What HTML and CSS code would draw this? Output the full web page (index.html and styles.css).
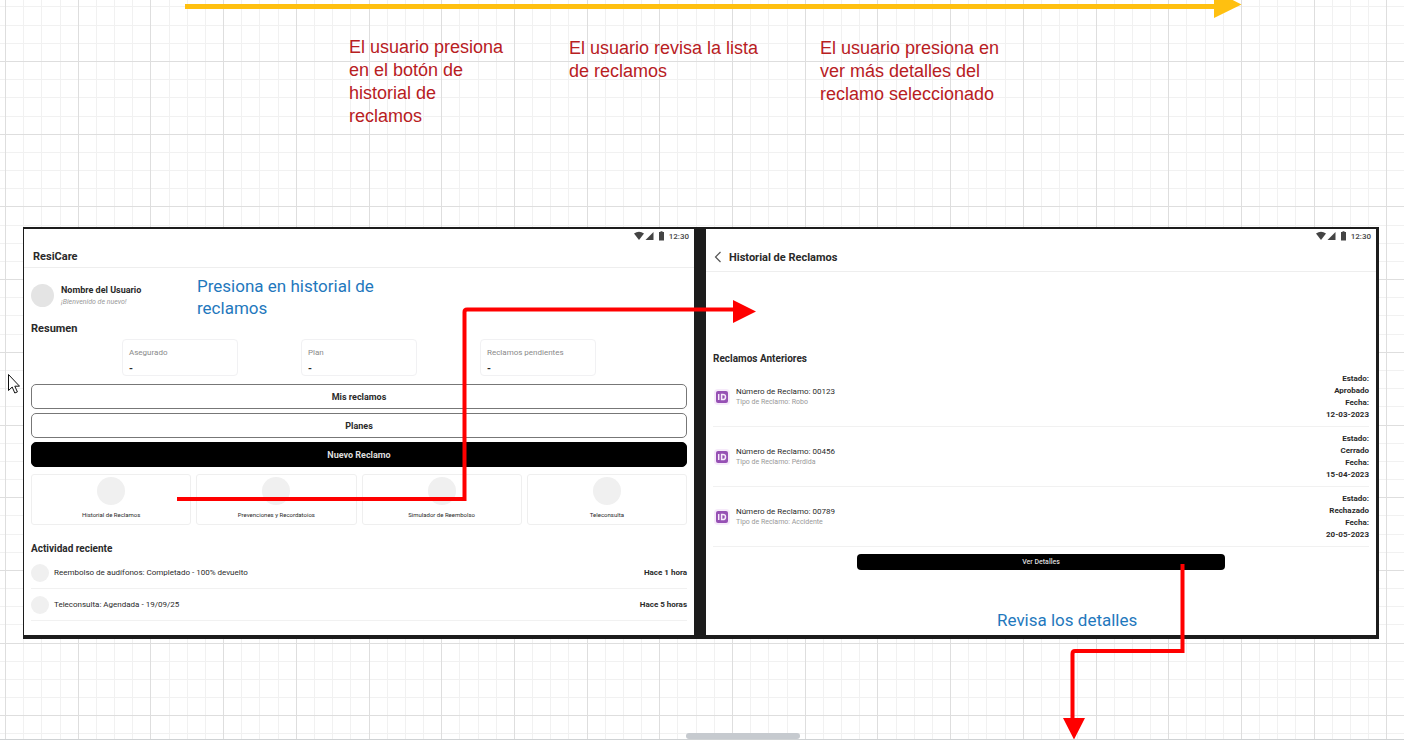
FILE: index.html
```html
<!DOCTYPE html>
<html lang="es">
<head>
<meta charset="utf-8">
<title>Flujo de reclamos</title>
<link rel="stylesheet" href="styles.css">
</head>
<body>
<svg class="defs" width="0" height="0" aria-hidden="true">
  <symbol id="status" viewBox="0 0 31 10">
    <path d="M0 2.600Q5 -1 10 2.600L5 9z"/>
    <path d="M19.500 1v8h-8z"/>
    <path d="M25 1h1.500V.3h2V1H30v8.400h-5z"/>
  </symbol>
  <symbol id="badge" viewBox="0 0 18 18">
    <rect x="1" y="1" width="16" height="16" rx="4" fill="#f6eafa"/>
    <rect x="3" y="3" width="12" height="12" rx="2" fill="#9650b4"/>
    <path d="M5.700 6v6M8.600 6.400v5.200h1.200q2.700 0 2.700-2.600t-2.700-2.600z" fill="none" stroke="#f6eafa" stroke-width="1.500"/>
  </symbol>
</svg>
<main class="board">
  <svg class="grid" id="grid" aria-hidden="true"></svg>

  <p class="note note-first">El usuario presiona en el botón de historial de reclamos</p>
  <p class="note note-second">El usuario revisa la lista de reclamos</p>
  <p class="note note-third">El usuario presiona en ver más detalles del reclamo seleccionado</p>

  <div class="screens">
    <section class="screen">
      <div class="statusbar"><svg width="31" height="10"><use href="#status"/></svg><span>12:30</span></div>
      <header class="appbar"><h1>ResiCare</h1></header>
      <div class="home">
        <div class="profile">
          <span class="avatar"></span>
          <div><strong>Nombre del Usuario</strong><em>¡Bienvenido de nuevo!</em></div>
        </div>
        <h2 class="summary-title">Resumen</h2>
        <div class="stats">
          <div class="stat"><span>Asegurado</span><b>-</b></div>
          <div class="stat"><span>Plan</span><b>-</b></div>
          <div class="stat"><span>Reclamos pendientes</span><b>-</b></div>
        </div>
        <div class="actions">
          <button type="button">Mis reclamos</button>
          <button type="button">Planes</button>
          <button type="button" class="primary">Nuevo Reclamo</button>
        </div>
        <div class="tiles">
          <button type="button"><i></i>Historial de Reclamos</button>
          <button type="button"><i></i>Prevenciones y Recordatoios</button>
          <button type="button"><i></i>Simulador de Reembolso</button>
          <button type="button"><i></i>Teleconsulta</button>
        </div>
        <h2 class="activity-title">Actividad reciente</h2>
        <ul class="activity">
          <li><i></i><span>Reembolso de audífonos: Completado - 100% devuelto</span><b>Hace 1 hora</b></li>
          <li><i></i><span>Teleconsulta: Agendada - 19/09/25</span><b>Hace 5 horas</b></li>
        </ul>
      </div>
    </section>

    <section class="screen">
      <div class="statusbar"><svg width="31" height="10"><use href="#status"/></svg><span>12:30</span></div>
      <header class="appbar appbar-back">
        <button type="button" class="back" aria-label="Volver"><svg width="8" height="12" viewBox="0 0 8 12"><path d="M6.500 1L1.500 6l5 5" fill="none" stroke="#555" stroke-width="1.200"/></svg></button>
        <h1>Historial de Reclamos</h1>
      </header>
      <div class="history">
        <h2>Reclamos Anteriores</h2>
        <ul class="claims">
          <li><svg width="18" height="18"><use href="#badge"/></svg><div class="claim"><span>Número de Reclamo: 00123</span><small>Tipo de Reclamo: Robo</small></div><b>Estado:<br>Aprobado<br>Fecha:<br>12-03-2023</b></li>
          <li><svg width="18" height="18"><use href="#badge"/></svg><div class="claim"><span>Número de Reclamo: 00456</span><small>Tipo de Reclamo: Pérdida</small></div><b>Estado:<br>Cerrado<br>Fecha:<br>15-04-2023</b></li>
          <li><svg width="18" height="18"><use href="#badge"/></svg><div class="claim"><span>Número de Reclamo: 00789</span><small>Tipo de Reclamo: Accidente</small></div><b>Estado:<br>Rechazado<br>Fecha:<br>20-05-2023</b></li>
        </ul>
        <button type="button" class="details">Ver Detalles</button>
      </div>
    </section>
  </div>

  <p class="hint hint-history">Presiona en historial de reclamos</p>
  <p class="hint hint-details">Revisa los detalles</p>

  <svg class="connectors" width="1404" height="740" aria-hidden="true">
    <path d="M185 6.500H1216" stroke="#ffc010" stroke-width="5" fill="none"/>
    <path d="M1214-9.500L1241.500 4.500 1214 18z" fill="#ffc010"/>
    <g fill="none" stroke="#f00" stroke-width="4">
      <path d="M177 499H464.500V312Q464.500 309.500 467 309.500H734"/>
      <path d="M1182.500 564V651H1075Q1072.500 651 1072.500 654V720"/>
    </g>
    <path d="M733 300L756 311.500 733 323zM1063 718H1085L1074 739.500z" fill="#f00"/>
  </svg>
  <svg class="pointer" width="12" height="20" viewBox="0 0 12 20" aria-hidden="true"><path d="M.5.500v16l3.700-3.500 2.600 6 2.600-1.100-2.600-5.700h4.700z" fill="#fff" stroke="#111"/></svg>
  <div class="thumb"></div>
</main>
<script src="grid.js"></script>
</body>
</html>
```
FILE: styles.css
```css
* { box-sizing: border-box; }
body {
  margin: 0;
  min-height: 100vh;
  display: flex;
  flex-direction: column;
  padding-bottom: 7px;
  background: #fff;
  color: #2a2a2a;
  font-family: Roboto, "Liberation Sans", sans-serif;
  font-size: 8px;
}
h1, h2, p, ul { margin: 0; padding: 0; }
h1, h2, b, strong { font-weight: 700; }
ul { list-style: none; }
button { font: inherit; color: inherit; cursor: pointer; }
svg { display: block; flex: none; }
.defs { position: absolute; }

.board {
  position: relative;
  flex: 1;
  padding: 227px 25px 0 23px;
  overflow: hidden;
  border-bottom: 1px solid #cfd2d4;
}
.grid { position: absolute; inset: 0; width: 100%; height: 100%; }
.connectors { position: absolute; left: 0; top: 0; }
.pointer { position: absolute; left: 8px; top: 374px; }
.thumb {
  position: absolute;
  left: 686px;
  bottom: 0;
  width: 114px;
  height: 6px;
  border-radius: 3px;
  background: #c6cacf;
}

.note, .hint { position: absolute; }
.note {
  color: #b8201f;
  font-family: "Liberation Sans", sans-serif;
  font-size: 18px;
  line-height: 23px;
}
.note-first { left: 349px; top: 36px; width: 165px; }
.note-second { left: 569px; top: 37px; width: 205px; }
.note-third { left: 820px; top: 37px; width: 190px; }
.hint { color: #1f78bd; font-size: 17px; line-height: 22px; }
.hint-history { left: 197px; top: 275px; width: 190px; }
.hint-details { left: 997px; top: 609px; }

.screens {
  position: relative;
  display: grid;
  grid-template-columns: 1fr 1fr;
  gap: 12px;
  background: #1c1c1c;
  border: solid #1c1c1c;
  border-width: 2px 3px 4px 1px;
}
.screen { background: #fff; min-height: 406px; }
.statusbar {
  display: flex;
  justify-content: flex-end;
  align-items: center;
  gap: 4px;
  height: 14px;
  padding: 0 5px;
  font-weight: 500;
  color: #444;
  fill: #444;
}
.appbar {
  display: flex;
  align-items: center;
  height: 25px;
  padding: 3px 9px 0;
  border-bottom: 1px solid #eee;
}
.appbar-back { height: 29px; padding: 0 8px; gap: 7px; }
h1 { font-size: 11px; }
.back { border: 0; background: none; padding: 0; }

.home { padding: 14px 7px 0; }
.profile { display: flex; align-items: center; gap: 7px; }
.profile div { padding-top: 2px; }
.profile strong { display: block; font-size: 9px; line-height: 12px; }
.profile em { display: block; font-size: 7px; line-height: 12px; color: #999; }
.avatar { width: 23px; height: 23px; border-radius: 50%; background: #e4e4e4; }
.summary-title { margin-top: 13px; font-size: 11px; line-height: 16px; }
.stats { display: flex; justify-content: center; gap: 63px; margin-top: 2px; }
.stat {
  width: 116px;
  height: 37px;
  padding: 7px 6px;
  border: 1px solid #f1f1f3;
  border-radius: 4px;
}
.stat span { display: block; line-height: 12px; color: #8a8a8a; }
.stat b { display: block; font-size: 10px; line-height: 16px; margin-top: 2px; }
.actions { display: grid; gap: 4px; margin-top: 8px; }
.actions button {
  height: 25px;
  padding: 0;
  border: 1px solid #777;
  border-radius: 5px;
  background: #fff;
  font-size: 9px;
  font-weight: 700;
}
.actions .primary { background: #000; border-color: #000; color: #ddd; }
.tiles { display: grid; grid-template-columns: repeat(4, 1fr); gap: 5px; margin-top: 7px; }
.tiles button {
  display: flex;
  flex-direction: column;
  align-items: center;
  gap: 6px;
  height: 51px;
  padding: 2px 0 0;
  border: 1px solid #efefef;
  border-radius: 3px;
  background: #fff;
  font-size: 6px;
  line-height: 8px;
}
.tiles i { width: 28px; height: 28px; border-radius: 50%; background: #f0f0f0; }
.activity-title { margin-top: 16px; font-size: 10px; line-height: 16px; }
.activity li {
  display: flex;
  align-items: center;
  gap: 5px;
  height: 32px;
  border-bottom: 1px solid #f1f1f1;
}
.activity i { width: 18px; height: 18px; border-radius: 50%; background: #f0f0f0; }
.activity b { margin-left: auto; }

.history { padding: 79px 7px 0; }
.history h2 { font-size: 10px; line-height: 16px; }
.claims li {
  display: flex;
  align-items: center;
  height: 60px;
  border-bottom: 1px solid #f1f1f1;
}
.claim { margin-left: 5px; }
.claim span, .claim small { display: block; line-height: 10px; }
.claim small { font-size: 7px; color: #999; }
.claims b { margin-left: auto; text-align: right; line-height: 12px; }
.details {
  display: block;
  width: 56%;
  height: 16px;
  margin: 7px auto 0;
  padding: 0;
  border: 0;
  border-radius: 4px;
  background: #000;
  color: #ddd;
  font-size: 7px;
  font-weight: 500;
}
```
FILE: grid.js
```js
// Draws the canvas grid: four minor cells in each major cell.
const grid = document.getElementById("grid");
const CELL = 72.7 / 4;

function lines(size, origin, make) {
  const paths = { minor: "", major: "" };
  const first = -Math.floor(origin / CELL);
  for (let i = first; origin + i * CELL < size; i++) {
    const at = Math.round(origin + i * CELL) + 0.5;
    paths[i % 4 === 0 ? "major" : "minor"] += make(at);
  }
  return paths;
}

function drawGrid() {
  const { width, height } = grid.getBoundingClientRect();
  const cols = lines(width, 5, x => `M${x} 0V${height}`);
  const rows = lines(height, 61, y => `M0 ${y}H${width}`);
  grid.innerHTML =
    `<path d="${cols.minor}${rows.minor}" stroke="#f1f1f1"/>` +
    `<path d="${cols.major}${rows.major}" stroke="#dedede"/>`;
}

drawGrid();
addEventListener("resize", drawGrid);
```
